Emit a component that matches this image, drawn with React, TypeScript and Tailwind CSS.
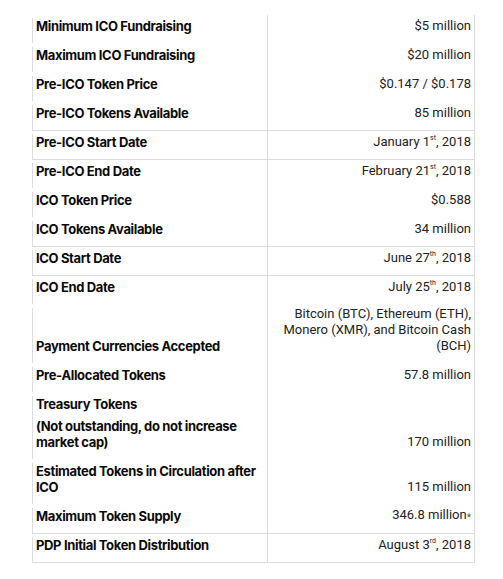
import clsx from 'clsx';
import { ReactNode } from 'react';

type Row = {
  label: ReactNode;
  value: ReactNode;
  line?: boolean;
};

const Sup = ({ children }: { children: ReactNode }) => (
  <sup className="text-[7px] relative -top-[1px] align-super leading-none">{children}</sup>
);

const rows: Row[] = [
  { label: 'Minimum ICO Fundraising', value: '$5 million' },
  { label: 'Maximum ICO Fundraising', value: '$20 million' },
  { label: 'Pre-ICO Token Price', value: '$0.147 / $0.178' },
  { label: 'Pre-ICO Tokens Available', value: '85 million', line: true },
  {
    label: 'Pre-ICO Start Date',
    value: (
      <>
        January 1<Sup>st</Sup>, 2018
      </>
    ),
    line: true,
  },
  {
    label: 'Pre-ICO End Date',
    value: (
      <>
        February 21<Sup>st</Sup>, 2018
      </>
    ),
  },
  { label: 'ICO Token Price', value: '$0.588' },
  { label: 'ICO Tokens Available', value: '34 million', line: true },
  {
    label: 'ICO Start Date',
    value: (
      <>
        June 27<Sup>th</Sup>, 2018
      </>
    ),
    line: true,
  },
  {
    label: 'ICO End Date',
    value: (
      <>
        July 25<Sup>th</Sup>, 2018
      </>
    ),
  },
  {
    label: 'Payment Currencies Accepted',
    value: (
      <>
        Bitcoin (BTC), Ethereum (ETH),
        <br />
        Monero (XMR), and Bitcoin Cash
        <br />
        (BCH)
      </>
    ),
  },
  { label: 'Pre-Allocated Tokens', value: '57.8 million' },
  {
    label: (
      <>
        <p>Treasury Tokens</p>
        <p className="mt-[6px]">
          (Not outstanding, do not increase
          <br />
          market cap)
        </p>
      </>
    ),
    value: '170 million',
  },
  {
    label: (
      <>
        Estimated Tokens in Circulation after
        <br />
        ICO
      </>
    ),
    value: '115 million',
  },
  {
    label: 'Maximum Token Supply',
    value: (
      <>
        346.8 million<span className="relative top-[2px] text-[10px] text-[#555]">*</span>
      </>
    ),
    line: true,
  },
  {
    label: 'PDP Initial Token Distribution',
    value: (
      <>
        August 3<Sup>rd</Sup>, 2018
      </>
    ),
    line: true,
  },
];

export default function App() {
  return (
    <div className="min-h-[579px] w-[503px] bg-white pt-[15px] pl-[32px]">
      <div className="w-[443px] text-[13px] leading-[16px]">
        {rows.map((row, i) => (
          <div
            key={i}
            className={clsx('grid grid-cols-[235px_208px]', row.line && 'border-b border-[#dcdcdc]')}
          >
            <div className={clsx('flex flex-col pt-[3px]', !row.line && 'pb-px')}>
              <div className="flex flex-1 flex-col justify-end whitespace-nowrap border-l border-[#dcdcdc] pb-[9px] pl-[3px] font-['Inter',sans-serif] font-bold tracking-[-0.35px] text-[#0a0a0a]">
                {row.label}
              </div>
            </div>
            <div
              className={clsx(
                'flex flex-col justify-end whitespace-nowrap border-x border-[#dcdcdc] pr-[3px] pt-px text-right font-["Roboto",sans-serif] text-[#222]',
                row.line ? 'pb-[9px]' : 'pb-[10px]'
              )}
            >
              <div>{row.value}</div>
            </div>
          </div>
        ))}
      </div>
    </div>
  );
}
